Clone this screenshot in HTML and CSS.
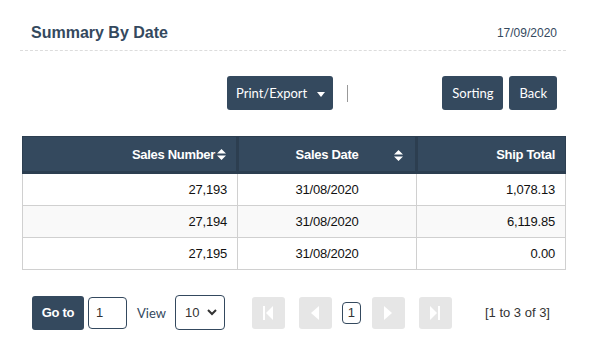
FILE: index.html
```html
<!DOCTYPE html>
<html lang="en">
<head>
    <meta charset="UTF-8">
    <title>Summary By Date</title>
    <link rel="stylesheet" href="styles.css">
</head>
<body>

    <div class="panel">
        <!-- Title bar -->
        <div class="panel-header">
            <h2>Summary By Date</h2>
            <span class="today">17/09/2020</span>
        </div>

        <!-- Toolbar -->
        <div class="toolbar">
            <button class="btn print">Print/Export <span class="caret"></span></button>
            <span class="divider"></span>
            <div class="spacer"></div>
            <button class="btn">Sorting</button>
            <button class="btn">Back</button>
        </div>

        <!-- Results table -->
        <table class="grid">
            <thead>
                <tr>
                    <th class="right col-num">Sales Number<svg class="sort" width="9" height="11" viewBox="0 0 9 11"><path d="M4.5 0L9 4.5H0Z M0 6.5H9L4.5 11Z" fill="#fff"/></svg></th>
                    <th class="col-date"><span>Sales Date</span><svg class="sort sort-far" width="9" height="11" viewBox="0 0 9 11"><path d="M4.5 0L9 4.5H0Z M0 6.5H9L4.5 11Z" fill="#fff"/></svg></th>
                    <th class="right">Ship Total</th>
                </tr>
            </thead>
            <tbody>
                <tr>
                    <td class="right">27,193</td>
                    <td class="center">31/08/2020</td>
                    <td class="right">1,078.13</td>
                </tr>
                <tr>
                    <td class="right">27,194</td>
                    <td class="center">31/08/2020</td>
                    <td class="right">6,119.85</td>
                </tr>
                <tr>
                    <td class="right">27,195</td>
                    <td class="center">31/08/2020</td>
                    <td class="right">0.00</td>
                </tr>
            </tbody>
        </table>

        <!-- Pager -->
        <div class="pager">
            <button class="btn goto">Go to</button>
            <input class="page-input" type="text" value="1">
            <span class="view-label">View</span>
            <select class="page-size">
                <option>10</option>
                <option>25</option>
                <option>50</option>
            </select>
            <div class="pages">
                <button class="nav"><svg width="10" height="14" viewBox="0 0 10 14"><rect x="0" y="0" width="2" height="14" fill="#fff"/><path d="M10 0V14L3 7Z" fill="#fff"/></svg></button>
                <button class="nav"><svg width="8" height="14" viewBox="0 0 8 14"><path d="M8 0V14L0 7Z" fill="#fff"/></svg></button>
                <span class="current">1</span>
                <button class="nav"><svg width="8" height="14" viewBox="0 0 8 14"><path d="M0 0V14L8 7Z" fill="#fff"/></svg></button>
                <button class="nav"><svg width="10" height="14" viewBox="0 0 10 14"><path d="M0 0V14L7 7Z" fill="#fff"/><rect x="8" y="0" width="2" height="14" fill="#fff"/></svg></button>
            </div>
            <span class="count">[1 to 3 of 3]</span>
        </div>
    </div>

</body>
</html>
```

FILE: styles.css
```css
body {
    margin: 0;
    background-color: #fff;
    font-family: "Liberation Sans", Arial, sans-serif;
    color: #333;
}
.panel {
    padding: 16px 32px 0 20px;
}
.panel-header {
    display: flex;
    justify-content: space-between;
    align-items: center;
    padding: 0 9px 0 11px;
    height: 34px;
    border-bottom: 1px dashed #dcdcdc;
}
.panel-header h2 {
    margin: 0;
    font-size: 16px;
    font-weight: bold;
    color: #34495e;
}
.today {
    font-size: 12px;
    color: #34495e;
}
.btn {
    background-color: #34495e;
    color: #fff;
    border: none;
    border-radius: 3px;
    font-family: Lato, "Open Sans", sans-serif;
    font-size: 13px;
    height: 34px;
    padding: 0 10px;
    white-space: nowrap;
    cursor: pointer;
}
.btn:hover {
    background-color: #2c3e50;
}
.toolbar {
    display: flex;
    align-items: center;
    justify-content: flex-end;
    gap: 6px;
    padding-right: 9px;
    margin-top: 25px;
}
.print {
    width: 106px;
    padding: 0;
}
.caret {
    display: inline-block;
    width: 0;
    height: 0;
    margin-left: 6px;
    vertical-align: middle;
    border-left: 4px solid transparent;
    border-right: 4px solid transparent;
    border-top: 5px solid #fff;
}
.divider {
    width: 1px;
    height: 17px;
    background-color: #999;
    margin-left: 8px;
}
.spacer {
    width: 82px;
}
/* Results grid */
.grid {
    width: 544px;
    margin: 26px 0 0 2px;
    border-collapse: collapse;
    font-size: 13px;
}
.grid th {
    background-color: #34495e;
    color: #fff;
    font-weight: bold;
    height: 34px;
    padding: 0 10px;
    border-left: 3px solid #2c3e50;
    border-bottom: 3px solid #2c3e50;
    border-top: 1px solid #2c3e50;
    letter-spacing: -0.3px;
}
.grid th:first-child {
    border-left: 1px solid #2c3e50;
}
.grid th:last-child {
    border-right: 1px solid #2c3e50;
}
.col-num {
    width: 193px;
}
.col-date {
    width: 156px;
    position: relative;
    text-align: center;
}
.sort {
    vertical-align: -1px;
    margin-left: 2px;
}
.sort-far {
    position: absolute;
    right: 12px;
    top: 13px;
}
.grid td {
    height: 31px;
    padding: 0 10px;
    border: 1px solid #d0d0d0;
    color: #111;
    letter-spacing: -0.2px;
}
.grid tbody tr:nth-child(even) td {
    background-color: #f9f9f9;
}
.right {
    text-align: right;
}
.center {
    text-align: center;
}
/* Pager */
.pager {
    display: flex;
    align-items: center;
    margin: 25px 0 0 12px;
    font-size: 13px;
}
.goto {
    width: 52px;
    padding: 0;
    font-family: "Liberation Sans", Arial, sans-serif;
    font-weight: bold;
    letter-spacing: -0.3px;
}
.page-input {
    width: 39px;
    height: 32px;
    box-sizing: border-box;
    margin-left: 4px;
    padding: 0 7px;
    border: 1px solid #34495e;
    border-radius: 4px;
    font-family: "Liberation Sans", Arial, sans-serif;
    font-size: 13px;
    color: #333;
}
.view-label {
    margin-left: 10px;
    color: #34495e;
    font-family: Lato, sans-serif;
}
.page-size {
    width: 50px;
    height: 35px;
    margin-left: 9px;
    padding: 0 0 0 9px;
    border: 1px solid #34495e;
    border-radius: 4px;
    background: #fff url("data:image/svg+xml;utf8,<svg xmlns='http://www.w3.org/2000/svg' width='10' height='7' viewBox='0 0 10 7'><path d='M1 1L5 5L9 1' fill='none' stroke='%23333' stroke-width='2'/></svg>") no-repeat right 7px center;
    -webkit-appearance: none;
    appearance: none;
    font-family: "Liberation Sans", Arial, sans-serif;
    font-size: 13px;
    color: #333;
}
.pages {
    display: flex;
    align-items: center;
    margin-left: 27px;
}
.nav {
    width: 33px;
    height: 32px;
    padding: 0;
    border: none;
    border-radius: 3px;
    background-color: #e6e6e6;
    display: flex;
    align-items: center;
    justify-content: center;
    margin-right: 14px;
}
.nav:nth-child(2) {
    margin-right: 10px;
}
.current {
    width: 19px;
    height: 22px;
    box-sizing: border-box;
    border: 1px solid #34495e;
    border-radius: 4px;
    display: flex;
    align-items: center;
    justify-content: center;
    margin-right: 11px;
}
.count {
    margin-left: 19px;
    color: #333;
}
```
